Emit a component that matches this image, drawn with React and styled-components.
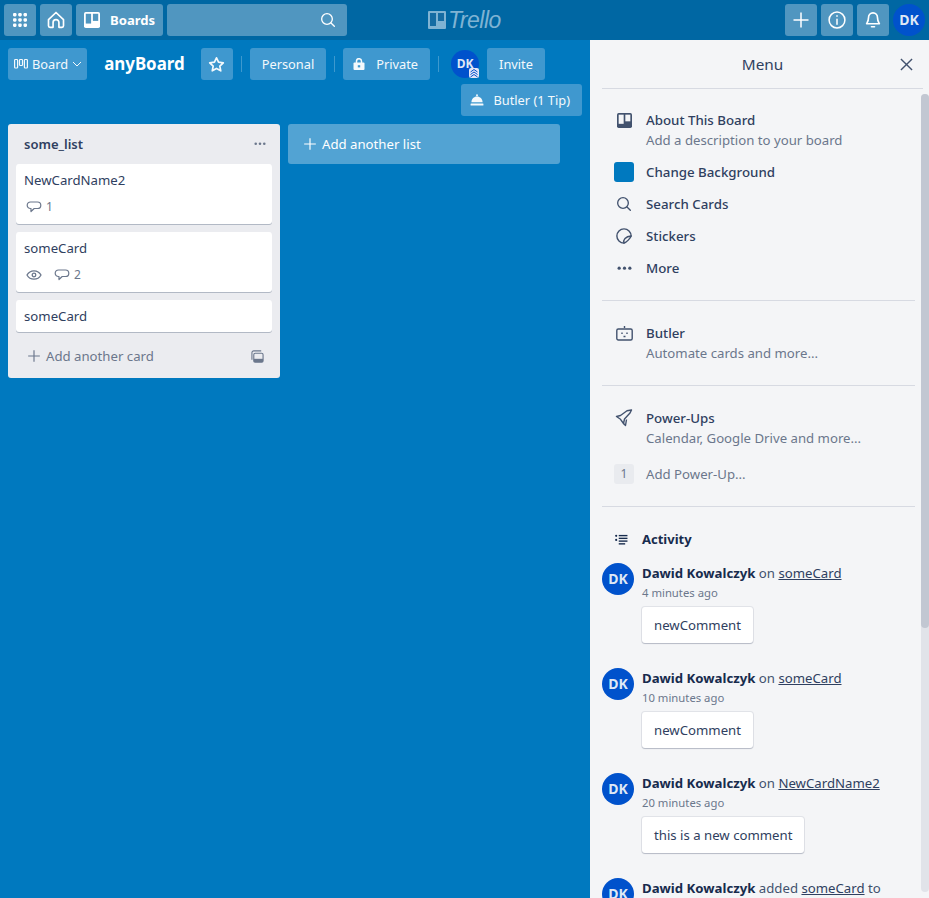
import React from 'react';
import styled, { createGlobalStyle } from 'styled-components';

const GlobalStyle = createGlobalStyle`
  html, body {
    margin: 0;
    height: 100%;
    overflow: hidden;
  }
  body {
    font-family: "Noto Sans", sans-serif;
    font-size: 13.2px;
    line-height: 20px;
    color: #172b4d;
  }
  * {
    box-sizing: border-box;
  }
`;

// ICONS
const Svg = ({ size = 16, children, ...rest }) => (
  <svg width={size} height={size} viewBox='0 0 24 24' fill='none' stroke='currentColor' strokeWidth='2' strokeLinecap='round' strokeLinejoin='round' {...rest}>
    {children}
  </svg>
);

const GridIcon = () => (
  <svg width='14' height='14' viewBox='0 0 16 16' fill='currentColor'>
    {[2, 8, 14].map((y) =>
      [2, 8, 14].map((x) => <rect key={`${x}-${y}`} x={x - 2} y={y - 2} width='4' height='4' rx='1.300' />)
    )}
  </svg>
);
const HomeIcon = () => (
  <Svg size={20}>
    <path d='M3 11.500 12 3l9 8.500v7.500a1.800 1.800 0 0 1-1.800 1.800H15.500v-5.800a3.500 3.500 0 0 0-7 0v5.800H4.800A1.800 1.800 0 0 1 3 19z' />
  </Svg>
);
const BoardIcon = ({ size = 16 }) => (
  <svg width={size} height={size} viewBox='0 0 18 18'>
    <rect width='18' height='18' rx='2' fill='currentColor' />
    <rect x='2' y='2' width='6' height='11' fill='var(--hole)' />
    <rect x='10' y='2' width='6' height='8' fill='var(--hole)' />
  </svg>
);
const SearchIcon = ({ size = 16 }) => (
  <Svg size={size}>
    <circle cx='10.500' cy='10.500' r='8' />
    <path d='m16.500 16.500 5 5' />
  </Svg>
);
const PlusIcon = ({ size = 18, width = 2 }) => (
  <Svg size={size} strokeWidth={width} strokeLinecap='butt'>
    <path d='M12 2v20M2 12h20' />
  </Svg>
);
const InfoIcon = () => (
  <Svg size={20} strokeWidth='1.800'>
    <circle cx='12' cy='12' r='9.500' />
    <path d='M12 11v6M12 7v.4' />
  </Svg>
);
const BellIcon = () => (
  <svg width='18' height='18' viewBox='0 0 24 24' fill='none' stroke='currentColor' strokeWidth='2.200' strokeLinejoin='round'>
    <path d='M12 2.500c-3.600 0-6 2.800-6 6.500 0 5-2.500 7-2.500 8h17c0-1-2.500-3-2.500-8 0-3.700-2.400-6.500-6-6.500z' />
    <path d='M10 21h4' strokeLinecap='round' />
  </svg>
);
const ListsIcon = () => (
  <svg width='14' height='12' viewBox='0 0 14 12' fill='none' stroke='currentColor' strokeWidth='1.200'>
    <rect x='.6' y='1.500' width='3' height='8.500' rx='.8' />
    <rect x='5.500' y='1.500' width='3' height='6' rx='.8' />
    <rect x='10.400' y='1.500' width='3' height='8.500' rx='.8' />
  </svg>
);
const ChevronIcon = () => (
  <svg width='10' height='10' viewBox='0 0 10 10' fill='none' stroke='currentColor' strokeWidth='1'>
    <path d='m1 3 4 4 4-4' />
  </svg>
);
const StarIcon = () => (
  <Svg size={17} strokeWidth='2.400'>
    <path d='m12 2.500 2.900 6.200 6.700.9-4.900 4.600 1.300 6.700-6-3.300-6 3.300 1.300-6.700-4.900-4.600 6.700-.9z' />
  </Svg>
);
const LockIcon = () => (
  <svg width='12' height='12' viewBox='0 0 12 12'>
    <path d='M3.500 5V3.200a2.500 2.500 0 0 1 5 0V5' fill='none' stroke='currentColor' strokeWidth='1.500' />
    <rect x='.5' y='4.500' width='11' height='7.500' rx='1' fill='currentColor' />
    <rect x='4.800' y='7.200' width='2.400' height='2.200' fill='#3f98cf' />
  </svg>
);
const BellhopIcon = () => (
  <svg width='14' height='12' viewBox='0 0 16 14' fill='currentColor'>
    <path d='M1.500 9.500C1.500 5.500 4.500 2.800 8 2.800s6.500 2.700 6.500 6.700z' />
    <rect x='7' y='.5' width='2' height='2' />
    <rect x='.5' y='11' width='15' height='2.500' rx='.6' />
  </svg>
);
const DotsIcon = ({ width = 12 }) => (
  <svg width={width} height={width / 3.500} viewBox='0 0 14 4' fill='currentColor'>
    <circle cx='2' cy='2' r='1.500' />
    <circle cx='7' cy='2' r='1.500' />
    <circle cx='12' cy='2' r='1.500' />
  </svg>
);
const CommentIcon = () => (
  <svg width='16' height='16' viewBox='0 0 16 16' fill='none' stroke='currentColor' strokeWidth='1.200' strokeLinejoin='round'>
    <path d='M4.500 3h7c1.900 0 3.300 1.300 3.300 3.200s-1.400 3.300-3.300 3.300H8.200L5 12.500v-3h-.5c-1.900 0-3.300-1.400-3.300-3.300S2.600 3 4.500 3z' />
  </svg>
);
const EyeIcon = () => (
  <svg width='16' height='16' viewBox='0 0 16 16' fill='none' stroke='currentColor' strokeWidth='1.300'>
    <path d='M1 8c1.500-2.700 4-4.200 7-4.200S13.500 5.300 15 8c-1.500 2.700-4 4.200-7 4.200S2.500 10.700 1 8z' />
    <circle cx='8' cy='8' r='1.800' />
  </svg>
);
const TemplateIcon = () => (
  <svg width='13' height='13' viewBox='0 0 14 14' fill='none' stroke='currentColor' strokeWidth='1.200'>
    <path d='M1 10.500V3a2 2 0 0 1 2-2h8' />
    <rect x='3' y='3.500' width='10' height='9.500' rx='1.500' />
    <rect x='3' y='9.500' width='10' height='3.500' fill='currentColor' stroke='none' />
  </svg>
);
const CloseIcon = () => (
  <svg width='13' height='13' viewBox='0 0 14 14' fill='none' stroke='currentColor' strokeWidth='1.500'>
    <path d='m1 1 12 12M13 1 1 13' />
  </svg>
);
const StickerIcon = () => (
  <Svg size={18} strokeWidth='1.900'>
    <path d='M12 21.500a9.500 9.500 0 1 1 9.500-9.500c-1 3-6 8.500-9.500 9.500z' />
    <path d='M12 21.500c-1.500-4 2-9 9.500-9.500' />
  </Svg>
);
const RobotIcon = () => (
  <svg width='17' height='15' viewBox='0 0 17 15' fill='none' stroke='currentColor' strokeWidth='1.400'>
    <rect x='.8' y='3' width='15.400' height='11' rx='1.500' />
    <path d='M8.500 0v2M6 6.500v1.500M11 6.500v1.500M7.500 10.500h2' />
  </svg>
);
const RocketIcon = () => (
  <svg width='18' height='18' viewBox='0 0 18 18' fill='none' stroke='currentColor' strokeWidth='1.400' strokeLinejoin='round'>
    <path d='M16.500 1 12 1.800 5.500 6.500 1.500 7.500l4 2.800 3 4.200 1-4.500 5.500-6z' />
    <path d='M11.500 10.500 10.500 16.500 8.500 14.500' />
  </svg>
);
const ActivityIcon = () => (
  <svg width='13' height='11' viewBox='0 0 14 12' fill='currentColor'>
    <circle cx='1.200' cy='2' r='1.200' />
    <circle cx='1.200' cy='6.500' r='1.200' />
    <rect x='4' y='1' width='9.500' height='1.500' />
    <rect x='4' y='4' width='9.500' height='1.500' />
    <rect x='4' y='7' width='9.500' height='1.500' />
    <rect x='4' y='10' width='7' height='1.500' />
  </svg>
);
const LogoIcon = () => (
  <svg width='18' height='18' viewBox='0 0 18 18'>
    <rect width='18' height='18' rx='1' fill='#7fb3d3' />
    <rect x='2' y='2' width='6' height='13' fill='#156ca3' />
    <rect x='10' y='2' width='6' height='8' fill='#156ca3' />
  </svg>
);

// HEADER
const Header = styled.header`
  height: 40px;
  flex: none;
  display: flex;
  align-items: center;
  gap: 4px;
  padding: 4px;
  background: #0067a3;
  color: #fff;
  position: relative;
`;
const HeaderButton = styled.button`
  height: 32px;
  min-width: 32px;
  padding: ${(p) => (p.$wide ? '0 8px' : '0')};
  border: 0;
  border-radius: 3px;
  background: #5096c0;
  color: #fff;
  display: flex;
  align-items: center;
  justify-content: center;
  gap: 10px;
  font: 700 13.1px "Noto Sans", sans-serif;
  --hole: #5096c0;
`;
const SearchBox = styled.div`
  width: 180px;
  height: 32px;
  border-radius: 3px;
  background: #5096c0;
  display: flex;
  align-items: center;
  justify-content: flex-end;
  padding-right: 11px;
`;
const Logo = styled.div`
  position: absolute;
  left: 428px;
  top: 11px;
  display: flex;
  align-items: center;
  gap: 2px;
  color: #7fb3d3;
`;
const LogoWord = styled.span`
  font: italic 400 23px/18px "Liberation Sans", sans-serif;
  letter-spacing: -0.5px;
`;
const HeaderSpacer = styled.div`
  flex: 1;
`;
const Avatar = styled.div`
  width: 32px;
  height: 32px;
  border-radius: 50%;
  background: #0052cc;
  color: #dfe8f5;
  flex: none;
  display: flex;
  align-items: center;
  justify-content: center;
  font-weight: 700;
  font-size: 14px;
  position: relative;
`;

// BOARD
const Page = styled.div`
  height: 898px;
  display: flex;
  flex-direction: column;
  background: #0079bf;
`;
const Content = styled.div`
  flex: 1;
  min-height: 0;
  display: flex;
`;
const BoardArea = styled.main`
  flex: 1;
  min-width: 0;
`;
const BoardBar = styled.div`
  display: flex;
  flex-wrap: wrap;
  align-items: center;
  justify-content: flex-end;
  padding: 8px;
  row-gap: 4px;
  color: #fff;
`;
const BoardBarRow = styled.div`
  display: flex;
  align-items: center;
  width: 100%;
`;
const BarButton = styled.button`
  height: 32px;
  min-width: 32px;
  padding: 0 ${(p) => p.$right ?? 12}px 0 ${(p) => p.$left ?? 12}px;
  border: 0;
  border-radius: 3px;
  background: #3f98cf;
  color: #f4f9fc;
  display: flex;
  align-items: center;
  justify-content: center;
  gap: ${(p) => p.$gap || 8}px;
  font: 400 12.8px "Noto Sans", sans-serif;
`;
const BoardName = styled.h1`
  margin: 0 16px 0 17px;
  font-size: 16.9px;
  line-height: 32px;
  font-weight: 700;
  color: #fff;
`;
const Separator = styled.span`
  width: 1px;
  height: 16px;
  background: rgba(255, 255, 255, 0.24);
  margin: 0 8px;
`;
const SmallAvatar = styled(Avatar)`
  width: 28px;
  height: 28px;
  font-size: 12px;
  margin: 0 8px 0 4px;
`;
const AdminBadge = styled.svg`
  position: absolute;
  right: 0;
  bottom: 0;
`;
const Lists = styled.div`
  display: flex;
  align-items: flex-start;
  gap: 8px;
  padding: 0 8px;
`;
const List = styled.section`
  width: 272px;
  border-radius: 3px;
  background: #ebecf0;
  padding: 0 8px;
`;
const ListHeader = styled.div`
  height: 40px;
  display: flex;
  align-items: center;
  justify-content: space-between;
  padding: 0 6px 0 8px;
  font-size: 13px;
  font-weight: 600;
  color: #2f4060;
`;
const ListMenu = styled.span`
  display: flex;
  color: #6b778c;
`;
const Card = styled.article`
  background: #fff;
  border-radius: 3px;
  box-shadow: 0 1px 0 rgba(9, 30, 66, 0.25);
  padding: 6px 8px ${(p) => (p.$badges ? '5px' : '2px')};
  margin-bottom: 8px;
  color: #2f4060;
  line-height: 20px;
  min-height: 32px;
`;
const CardBadges = styled.div`
  display: flex;
  align-items: center;
  gap: 12px;
  height: 24px;
  margin-top: 5px;
  padding-left: 2px;
  color: #6b778c;
  font-size: 12px;
`;
const CardBadge = styled.span`
  display: flex;
  align-items: center;
  gap: 4px;
`;
const ListFooter = styled.div`
  height: 38px;
  padding: 0 8px 6px 11px;
  display: flex;
  align-items: center;
  justify-content: space-between;
  color: #6b778c;
`;
const FooterLabel = styled.span`
  display: flex;
  align-items: center;
  gap: 5px;
`;
const AddList = styled.div`
  width: 272px;
  height: 40px;
  border-radius: 3px;
  background: #52a3d3;
  color: #fff;
  display: flex;
  align-items: center;
  gap: 5px;
  padding: 0 15px;
`;

// MENU
const Menu = styled.aside`
  width: 339px;
  flex: none;
  display: flex;
  flex-direction: column;
  background: #f4f5f7;
  min-height: 0;
  position: relative;
`;
const MenuHeader = styled.div`
  height: 49px;
  flex: none;
  margin: 0 6px 0 12px;
  border-bottom: 1px solid #d7dae2;
  display: flex;
  align-items: center;
  justify-content: center;
  position: relative;
  font-size: 15.300px;
  color: #2f4060;
`;
const CloseButton = styled.span`
  position: absolute;
  right: 10px;
  top: 18px;
  display: flex;
  color: #42526e;
`;
const MenuScroll = styled.div`
  flex: 1;
  min-height: 0;
  margin-top: 5px;
  overflow: hidden;
  padding: 0 14px 0 12px;
`;
const ScrollTrack = styled.div`
  position: absolute;
  right: 0;
  top: 54px;
  width: 8px;
  height: 798px;
  border-radius: 4px;
  background: #e1e3e9;
`;
const ScrollThumb = styled.div`
  height: 534px;
  border-radius: 4px;
  background: #c2c7d2;
`;
const MenuSection = styled.section`
  border-bottom: 1px solid #d7dae2;
  padding: ${(p) => p.$top || 16}px 0 ${(p) => p.$bottom || 16}px;
`;
const MenuRow = styled.div`
  display: grid;
  grid-template-columns: 20px 1fr;
  column-gap: 12px;
  padding: 6px 12px;
  margin-top: ${(p) => p.$gapTop || 0}px;
  min-height: 32px;
  color: #2f4060;
`;
const MenuIconBox = styled.span`
  width: 20px;
  height: 20px;
  display: flex;
  align-items: center;
  justify-content: center;
  color: #42526e;
  --hole: #f4f5f7;
`;
const Swatch = styled.span`
  width: 20px;
  height: 20px;
  border-radius: 3px;
  background: #0079bf;
`;
const CountBox = styled.span`
  width: 20px;
  height: 20px;
  border-radius: 3px;
  background: #e9ebef;
  color: #6b778c;
  font-size: 12px;
  display: flex;
  align-items: center;
  justify-content: center;
`;
const RowTitle = styled.div`
  font-size: 13.300px;
  font-weight: 500;
  color: #2f4060;
`;
const RowSub = styled.div`
  color: #6b778c;
`;
const ActivityHead = styled.div`
  display: flex;
  align-items: center;
  gap: 14px;
  padding: 21px 0 0 13px;
  height: 43px;
  font-size: 13px;
  font-weight: 700;
  color: #172b4d;
`;
const ActivityList = styled.div`
  padding-top: 13px;
  display: flex;
  flex-direction: column;
  gap: 25px;
`;
const Entry = styled.div`
  display: grid;
  grid-template-columns: 32px 1fr;
  column-gap: 8px;
`;
const EntryLine = styled.div`
  color: #42526e;
  line-height: 20px;
`;
const Author = styled.b`
  font-weight: 700;
  color: #172b4d;
`;
const CardLink = styled.a`
  color: #2f4060;
  text-decoration: underline;
`;
const EntryTime = styled.div`
  font-size: 11.300px;
  line-height: 20px;
  color: #6b778c;
`;
const Comment = styled.div`
  display: inline-block;
  margin-top: 4px;
  background: #fff;
  border-radius: 3px;
  box-shadow: 0 0 0 1px rgba(9, 30, 66, 0.08), 0 1px 1px rgba(9, 30, 66, 0.2);
  padding: 8px 12px;
  color: #2f4060;
  line-height: 20px;
`;

const comments = [
  { card: 'someCard', time: '4 minutes ago', text: 'newComment' },
  { card: 'someCard', time: '10 minutes ago', text: 'newComment' },
  { card: 'NewCardName2', time: '20 minutes ago', text: 'this is a new comment' },
];

const ActivityEntry = ({ card, time, text }) => (
  <Entry>
    <Avatar>DK</Avatar>
    <div>
      <EntryLine>
        <Author>Dawid Kowalczyk</Author> on <CardLink>{card}</CardLink>
      </EntryLine>
      <EntryTime>{time}</EntryTime>
      <Comment>{text}</Comment>
    </div>
  </Entry>
);

const App = () => {
  return (
    <Page>
      <GlobalStyle />
      <Header>
        <HeaderButton><GridIcon /></HeaderButton>
        <HeaderButton><HomeIcon /></HeaderButton>
        <HeaderButton $wide><BoardIcon />Boards</HeaderButton>
        <SearchBox><SearchIcon /></SearchBox>
        <Logo>
          <LogoIcon />
          <LogoWord>Trello</LogoWord>
        </Logo>
        <HeaderSpacer />
        <HeaderButton><PlusIcon /></HeaderButton>
        <HeaderButton><InfoIcon /></HeaderButton>
        <HeaderButton><BellIcon /></HeaderButton>
        <Avatar>DK</Avatar>
      </Header>
      <Content>
        <BoardArea>
          <BoardBar>
            <BoardBarRow>
              <BarButton $left={6} $right={5} $gap={4}><ListsIcon />Board<ChevronIcon /></BarButton>
              <BoardName>anyBoard</BoardName>
              <BarButton $left={0} $right={0}><StarIcon /></BarButton>
              <Separator />
              <BarButton>Personal</BarButton>
              <Separator />
              <BarButton $left={10} $gap={11}><LockIcon />Private</BarButton>
              <Separator />
              <SmallAvatar>
                DK
                <AdminBadge width='10' height='10' viewBox='0 0 10 10' fill='none' stroke='#0052cc' strokeWidth='1'>
                  <rect width='10' height='10' rx='2' fill='#e4e6f6' stroke='none' />
                  <path d='m1.500 4 3.500-2.500L8.500 4M1.500 6.500 5 4l3.500 2.500M1.500 9 5 6.500 8.500 9' />
                </AdminBadge>
              </SmallAvatar>
              <BarButton>Invite</BarButton>
            </BoardBarRow>
            <BarButton $left={9} $gap={9}><BellhopIcon />Butler (1 Tip)</BarButton>
          </BoardBar>
          <Lists>
            <List>
              <ListHeader>
                some_list
                <ListMenu><DotsIcon /></ListMenu>
              </ListHeader>
              <Card $badges>
                NewCardName2
                <CardBadges>
                  <CardBadge><CommentIcon />1</CardBadge>
                </CardBadges>
              </Card>
              <Card $badges>
                someCard
                <CardBadges>
                  <CardBadge><EyeIcon /></CardBadge>
                  <CardBadge><CommentIcon />2</CardBadge>
                </CardBadges>
              </Card>
              <Card>someCard</Card>
              <ListFooter>
                <FooterLabel><PlusIcon size={14} />Add another card</FooterLabel>
                <TemplateIcon />
              </ListFooter>
            </List>
            <AddList><PlusIcon size={14} />Add another list</AddList>
          </Lists>
        </BoardArea>
        <Menu>
          <MenuHeader>
            Menu
            <CloseButton><CloseIcon /></CloseButton>
          </MenuHeader>
          <MenuScroll>
            <MenuSection $top={10} $bottom={16}>
              <MenuRow>
                <MenuIconBox><BoardIcon size={15} /></MenuIconBox>
                <div>
                  <RowTitle>About This Board</RowTitle>
                  <RowSub>Add a description to your board</RowSub>
                </div>
              </MenuRow>
              <MenuRow><Swatch /><RowTitle>Change Background</RowTitle></MenuRow>
              <MenuRow><MenuIconBox><SearchIcon /></MenuIconBox><RowTitle>Search Cards</RowTitle></MenuRow>
              <MenuRow><MenuIconBox><StickerIcon /></MenuIconBox><RowTitle>Stickers</RowTitle></MenuRow>
              <MenuRow><MenuIconBox><DotsIcon width={15} /></MenuIconBox><RowTitle>More</RowTitle></MenuRow>
            </MenuSection>
            <MenuSection $top={16} $bottom={16}>
              <MenuRow>
                <MenuIconBox><RobotIcon /></MenuIconBox>
                <div>
                  <RowTitle>Butler</RowTitle>
                  <RowSub>Automate cards and more...</RowSub>
                </div>
              </MenuRow>
            </MenuSection>
            <MenuSection $top={16} $bottom={16}>
              <MenuRow>
                <MenuIconBox><RocketIcon /></MenuIconBox>
                <div>
                  <RowTitle>Power-Ups</RowTitle>
                  <RowSub>Calendar, Google Drive and more...</RowSub>
                </div>
              </MenuRow>
              <MenuRow $gapTop={4}>
                <CountBox>1</CountBox>
                <RowSub>Add Power-Up...</RowSub>
              </MenuRow>
            </MenuSection>
            <ActivityHead><ActivityIcon />Activity</ActivityHead>
            <ActivityList>
              {comments.map((c) => (
                <ActivityEntry key={c.time} {...c} />
              ))}
              <Entry>
                <Avatar>DK</Avatar>
                <div>
                  <EntryLine>
                    <Author>Dawid Kowalczyk</Author> added <CardLink>someCard</CardLink> to
                  </EntryLine>
                </div>
              </Entry>
            </ActivityList>
          </MenuScroll>
          <ScrollTrack><ScrollThumb /></ScrollTrack>
        </Menu>
      </Content>
    </Page>
  );
};

export default App;
